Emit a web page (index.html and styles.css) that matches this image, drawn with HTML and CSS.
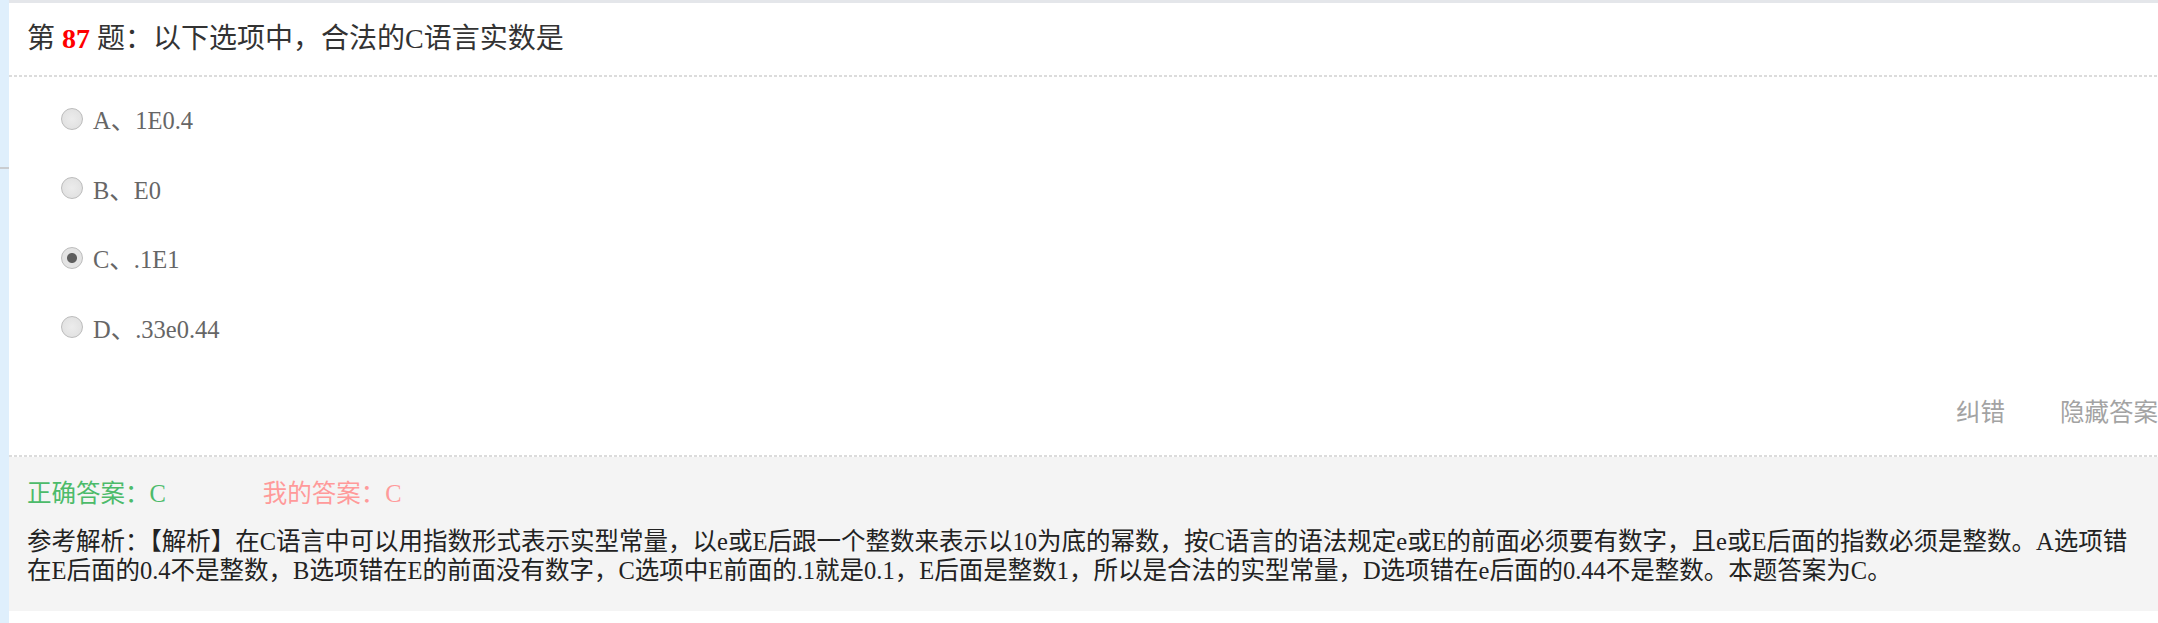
FILE: index.html
```html
<!DOCTYPE html>
<html lang="zh-CN">
<head>
  <meta charset="UTF-8">
  <meta name="viewport" content="width=device-width, initial-scale=1.0">
  <title>第87题</title>
  <link rel="stylesheet" href="styles.css">
</head>
<body>
  <div class="page">
    <div class="side"><div class="side-line"></div></div>

    <div class="main">
      <div class="question">第 <b class="num">87</b> 题：以下选项中，合法的C语言实数是</div>
      <div class="dash"></div>

      <div class="options">
        <label class="option"><input type="radio" name="q87" class="radio"> A、1E0.4</label>
        <label class="option"><input type="radio" name="q87" class="radio"> B、E0</label>
        <label class="option"><input type="radio" name="q87" class="radio" checked> C、.1E1</label>
        <label class="option"><input type="radio" name="q87" class="radio"> D、.33e0.44</label>
      </div>

      <div class="tools">
        <a class="tool">纠错</a>
        <a class="tool">隐藏答案</a>
      </div>
      <div class="dash"></div>

      <div class="answer">
        <div class="answer-row">
          <span class="right-answer">正确答案：C</span>
          <span class="my-answer">我的答案：C</span>
        </div>
        <p class="analysis">参考解析：【解析】在C语言中可以用指数形式表示实型常量，以e或E后跟一个整数来表示以10为底的幂数，按C语言的语法规定e或E的前面必须要有数字，且e或E后面的指数必须是整数。A选项错在E后面的0.4不是整数，B选项错在E的前面没有数字，C选项中E前面的.1就是0.1，E后面是整数1，所以是合法的实型常量，D选项错在e后面的0.44不是整数。本题答案为C。</p>
      </div>
    </div>
  </div>
</body>
</html>
```

FILE: styles.css
```css
html, body {
  margin: 0;
  background-color: #fff;
}
body {
  font-family: "Liberation Serif", "Noto Sans CJK SC", serif;
  color: #333;
  overflow: hidden;
}
.page {
  display: flex;
  min-height: 623px;
}
.side {
  width: 9px;
  flex-shrink: 0;
  background-color: #dfeffc;
}
.side-line {
  margin-top: 167px;
  height: 2px;
  background-color: #c9ccd0;
}
.main {
  flex: 1;
  border-top: 3px solid #e4e6ea;
}
.question {
  height: 72px;
  line-height: 72px;
  padding: 0 18px;
  font-size: 28px;
  color: #333;
}
.num {
  color: #f00;
}
.dash {
  height: 2px;
  background: repeating-linear-gradient(90deg, #dcdcdc 0 3px, transparent 3px 5px);
}
.options {
  padding-top: 7px;
}
.option {
  display: flex;
  align-items: center;
  height: 69.5px;
  padding-left: 52px;
  font-size: 24.5px;
  color: #666;
}
.radio {
  appearance: none;
  -webkit-appearance: none;
  width: 22px;
  height: 22px;
  margin: 0 10px 0 0;
  border: 1px solid #bcbcbc;
  border-radius: 50%;
  background: radial-gradient(circle, #ececec 0, #dedede 100%);
  box-sizing: border-box;
}
.radio:checked {
  background: radial-gradient(circle, #5e5e5e 0 4.5px, #e4e4e4 5.5px);
}
.tools {
  display: flex;
  justify-content: flex-end;
  gap: 55px;
  padding: 32px 0 27px;
  line-height: 34px;
}
.tool {
  font-family: "Noto Sans CJK SC", sans-serif;
  font-size: 24.5px;
  color: #a3a3a3;
  cursor: pointer;
}
.answer {
  background-color: #f4f4f4;
  padding: 22px 14px 26px 18px;
}
.answer-row {
  display: flex;
  gap: 97px;
  line-height: 30px;
  font-size: 24.5px;
}
.right-answer {
  color: #4cbb6a;
}
.my-answer {
  color: #ff9a9a;
}
.analysis {
  margin: 18px 0 0;
  font-size: 24.5px;
  line-height: 29px;
  color: #222;
}
```
